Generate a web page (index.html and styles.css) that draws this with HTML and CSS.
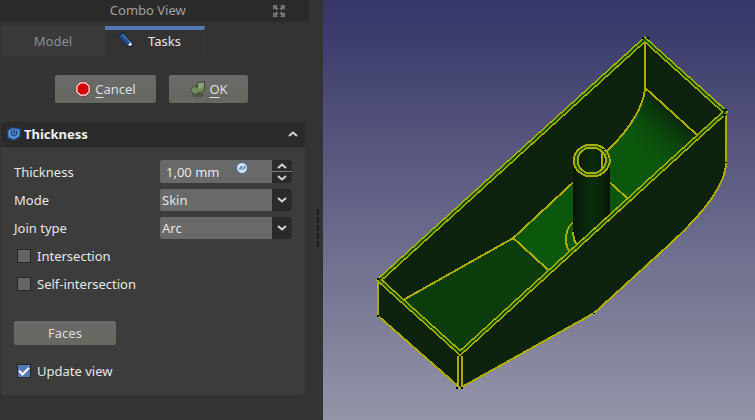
FILE: index.html
```html
<!DOCTYPE html>
<html lang="en">
<head>
    <meta charset="UTF-8">
    <meta name="viewport" content="width=device-width, initial-scale=1.0">
    <title>Combo View</title>
    <link rel="stylesheet" href="styles.css">
</head>
<body>

    <div class="app">

        <!-- Side panel -->
        <aside class="combo">
            <header class="dock-title">
                <span class="dock-name">Combo View</span>
                <button class="float-button" aria-label="Float panel">
                    <svg width="12" height="12" viewBox="0 0 12 12">
                        <path d="M0 0H5L3.500 1.500 5.500 3.500 3.500 5.500 1.500 3.500 0 5ZM12 0V5L10.500 3.500 8.500 5.500 6.500 3.500 8.500 1.500 7 0ZM0 12V7L1.500 8.500 3.500 6.500 5.500 8.500 3.500 10.500 5 12ZM12 12H7L8.500 10.500 6.500 8.500 8.500 6.500 10.500 8.500 12 7Z"/>
                    </svg>
                </button>
            </header>

            <nav class="tabs" role="tablist">
                <button class="tab" role="tab" aria-selected="false">Model</button>
                <button class="tab active" role="tab" aria-selected="true">
                    <svg width="16" height="16" viewBox="0 0 16 16">
                        <path d="M0 4L5 0L14 10L15 15L10 15Z" fill="#0b1c38"/>
                        <path d="M1 4L5 1L13 10L10 14Z" fill="#2b5796"/>
                        <path d="M2 4L11 13.500" stroke="#204a87" stroke-width="2"/>
                        <path d="M4.500 2L13 11" stroke="#5582bd" stroke-width="1"/>
                        <path d="M10 13L13 10L14 13L12 14Z" fill="#f2f2ee"/>
                    </svg>
                    Tasks
                </button>
            </nav>

            <div class="actions">
                <button class="btn btn-cancel">
                    <svg width="16" height="16" viewBox="0 0 16 16">
                        <path d="M5 1H11L15 5V11L11 15H5L1 11V5Z" fill="#f4f4f4" stroke="#a40000" stroke-width="0.500"/>
                        <path d="M5.500 2.500H10.500L13.500 5.500V10.500L10.500 13.500H5.500L2.500 10.500V5.500Z" fill="#d40000"/>
                    </svg>
                    <span><u>C</u>ancel</span>
                </button>
                <button class="btn btn-ok">
                    <svg width="16" height="16" viewBox="0 0 16 16">
                        <ellipse cx="9" cy="14" rx="6" ry="2" fill="#50524a"/>
                        <path d="M8.500 1H15.500V7Q15 12 8 12V15L0.500 9L7 4V7Q8.500 7 8.500 5Z" fill="#758c60" stroke="#3d4c30"/>
                        <path d="M9.500 2H14.500V6Q12 8 9.500 7.500Z" fill="#8fa37b"/>
                    </svg>
                    <span><u>O</u>K</span>
                </button>
            </div>

            <!-- Thickness task box -->
            <section class="task">
                <header class="task-head">
                    <svg width="14" height="14" viewBox="0 0 14 14">
                        <path d="M0.500 3L5 0.500L13.500 1.500L13 10L7 13.500L0.500 11Z" fill="#3465a4" stroke="#1d4173"/>
                        <path d="M1.500 3.500L5.500 1.500L12.500 2.500L12 9L7 12L1.500 10Z" fill="#4a7fc2"/>
                        <path d="M4.500 4V8Q7 10 9.500 7.500V4M7 2.500V7" fill="none" stroke="#1b427b"/>
                        <path d="M2.500 4V9L7 11L11.500 8.500V4" fill="none" stroke="#729fcf"/>
                    </svg>
                    <h2>Thickness</h2>
                    <button class="collapse" aria-label="Collapse">
                        <svg width="10" height="6" viewBox="0 0 10 6"><path d="M1 5L5 1.500L9 5"/></svg>
                    </button>
                </header>

                <form class="task-body">
                    <div class="row">
                        <label for="thickness">Thickness</label>
                        <div class="field">
                            <input type="text" id="thickness" class="value" value="1,00 mm">
                            <svg class="expression" width="12" height="12" viewBox="0 0 12 12">
                                <circle cx="6" cy="6" r="5.500" fill="#d5e4f3" stroke="#45678e"/>
                                <path d="M3 8L5 4L5 8L7 4M7 8L9 4V7" fill="none" stroke="#5487bd"/>
                            </svg>
                            <div class="spin">
                                <button type="button" aria-label="Increase"><svg width="10" height="6" viewBox="0 0 10 6"><path d="M1 5L5 1.500L9 5"/></svg></button>
                                <button type="button" aria-label="Decrease"><svg width="10" height="6" viewBox="0 0 10 6"><path d="M1 1L5 4.500L9 1"/></svg></button>
                            </div>
                        </div>
                    </div>
                    <div class="row">
                        <label for="mode">Mode</label>
                        <div class="field">
                            <select id="mode"><option>Skin</option></select>
                            <span class="drop"><svg width="10" height="6" viewBox="0 0 10 6"><path d="M1 1L5 4.500L9 1"/></svg></span>
                        </div>
                    </div>
                    <div class="row">
                        <label for="join">Join type</label>
                        <div class="field">
                            <select id="join"><option>Arc</option></select>
                            <span class="drop"><svg width="10" height="6" viewBox="0 0 10 6"><path d="M1 1L5 4.500L9 1"/></svg></span>
                        </div>
                    </div>

                    <label class="check"><input type="checkbox">Intersection</label>
                    <label class="check"><input type="checkbox">Self-intersection</label>
                    <button type="button" class="btn btn-faces">Faces</button>
                    <label class="check"><input type="checkbox" checked>Update view</label>
                </form>
            </section>
        </aside>

        <div class="splitter"></div>

        <!-- 3D view -->
        <main class="view">
            <svg class="scene" viewBox="323 0 432 420" role="img" aria-label="Hollow green part with a tube inside">
                <defs>
                    <linearGradient id="tube" x1="0" x2="1" y1="0" y2="0">
                        <stop offset="0" stop-color="#071507"/>
                        <stop offset="0.150" stop-color="#09200b"/>
                        <stop offset="0.500" stop-color="#0b2d0d"/>
                        <stop offset="0.850" stop-color="#09200b"/>
                        <stop offset="1" stop-color="#061206"/>
                    </linearGradient>
                    <linearGradient id="bend" gradientUnits="userSpaceOnUse" x1="674" y1="108" x2="638" y2="148">
                        <stop offset="0" stop-color="#0c220c"/>
                        <stop offset="0.300" stop-color="#0b390d"/>
                        <stop offset="0.650" stop-color="#0b4f0c"/>
                        <stop offset="1" stop-color="#0b580c"/>
                    </linearGradient>
                </defs>

                <!-- body -->
                <path class="wall" d="M378 280L644 38L726 112V163C725 186 700 216 672 242L594 313L460 388L378 316Z"/>

                <!-- floor -->
                <path fill="#0b3c0c" d="M403 301L513 238L549 272L460 354Z"/>
                <path fill="#0b580c" d="M513 238L609 149L628 199L549 272Z"/>
                <path fill="url(#bend)" d="M645 88C643 109 628 130 609 150L598 160V170L628 199L698 136Z"/>
                <path class="edge" d="M645 40V88C643 109 628 130 609 149L513 238L403 300M645 88L698 136M513 238L549 271M598 172L628 199"/>

                <!-- tube -->
                <path class="edge" fill="#0c220c" d="M576 221C563 226 564 245 570 253"/>
                <path fill="url(#tube)" d="M573 160H610V216L577 246Q573 241 573 235Z"/>
                <path class="edge" d="M573 232Q573 241 577 245"/>
                <ellipse cx="591.500" cy="160.500" rx="18" ry="16" fill="#0b580c" stroke="#acac00" stroke-width="2"/>
                <ellipse cx="591.500" cy="160.500" rx="14" ry="13" fill="url(#tube)" stroke="#acac00" stroke-width="2"/>
                <path class="edge" d="M602 170V152Q606 155 606 161"/>

                <!-- rim and outer edges -->
                <path class="rim-line" d="M379 280L644.500 39.500L725 112L460 353Z"/>
                <path class="rim-fill" d="M379 280L644.500 39.500L725 112L460 353Z"/>
                <path class="edge" d="M378 280V316L460 388L594 313L672 242C700 216 725 186 726 163"/>
                <path class="edge" d="M378 283V315M458 356V387M462 356V387M726 115V163"/>
                <path class="vertex" d="M642 37h2v2h-2zM647 37h2v2h-2zM377 278h2v2h-2zM724 109h3v2h-3zM723 114h3v2h-3zM459 352h2v2h-2zM456 387h2v2h-2zM461 387h2v2h-2zM593 313h2v1h-2zM377 315h2v2h-2zM725 162h2v1h-2zM602 149h3v1h-3z"/>
            </svg>
        </main>

    </div>

</body>
</html>
```
FILE: styles.css
```css
* {
    box-sizing: border-box;
}

body {
    margin: 0;
    background: #333333;
    color: #e6e6e6;
    font-family: "Noto Sans", sans-serif;
    font-size: 13px;
    line-height: 18px;
}

button,
input,
select {
    margin: 0;
    padding: 0;
    border: none;
    color: inherit;
    font: inherit;
}

svg {
    display: block;
    flex: none;
}

.app {
    display: flex;
    min-height: 100vh;
}

/* Side panel */
.combo {
    flex: none;
    width: 41%;
}

.dock-title {
    display: flex;
    align-items: center;
    height: 22px;
    margin-right: 1px;
    padding: 0 24px 0 23px;
    background: #2a2a2a;
    color: #a0a0a0;
    border-radius: 0 0 3px 0;
}

.dock-name {
    flex: 1;
    padding-bottom: 2px;
    text-align: center;
}

.float-button {
    background: none;
    fill: #757575;
}

.tabs {
    display: flex;
    padding: 4px 0 0 1px;
}

.tab {
    display: flex;
    align-items: center;
    justify-content: center;
    width: 104px;
    height: 30px;
    background: #3a3a3a;
    color: #8c8c8c;
}

.tab.active {
    justify-content: flex-start;
    gap: 14px;
    width: 100px;
    padding: 0 0 4px 13px;
    background: #333333;
    color: #e6e6e6;
    border-top: 4px solid #557bb6;
    border-right: 1px solid #3a3a3a;
}

.tab.active svg {
    margin-bottom: 2px;
}

/* Buttons */
.btn {
    display: flex;
    align-items: center;
    justify-content: center;
    gap: 4px;
    height: 28px;
    background: linear-gradient(#6a6a6a, #66675e);
    color: #dedede;
    border-radius: 2px;
}

.btn u {
    text-underline-offset: 3px;
}

.actions {
    display: flex;
    gap: 13px;
    padding: 19px 0 19px 55px;
}

.btn-cancel {
    width: 101px;
}

.btn-ok {
    width: 79px;
}

.btn-faces {
    width: 102px;
    height: 24px;
    margin: 26px 0 15px;
}

/* Task box */
.task {
    margin: 0 5px 0 1px;
    background: #3c3c3c;
    border-radius: 4px;
}

.task-head {
    display: flex;
    align-items: center;
    gap: 3px;
    height: 25px;
    padding: 0 7px 1px 6px;
    background: #2a2a2a;
    border-radius: 4px 4px 0 0;
}

.task-head h2 {
    flex: 1;
    margin: 0;
    font-size: 13px;
    line-height: 18px;
    color: #f0f0f0;
}

.collapse {
    background: none;
}

.collapse path,
.spin path,
.drop path {
    fill: none;
    stroke: #d6d6d6;
    stroke-width: 2;
}

.task-body {
    padding: 13px;
}

.row {
    display: grid;
    grid-template-columns: 146px 1fr;
    align-items: center;
    margin-bottom: 6px;
}

.row:first-child .field {
    height: 23px;
}

.field {
    position: relative;
    display: flex;
    height: 22px;
    background: #696969;
    border-radius: 2px;
    overflow: hidden;
}

.value {
    flex: 1;
    min-width: 0;
    padding: 1px 6px 0;
    background: transparent;
}

.expression {
    position: absolute;
    top: 2px;
    right: 44px;
}

.spin {
    display: grid;
    gap: 1px;
    width: 20px;
    background: #777777;
}

.spin button {
    display: grid;
    place-items: center;
    background: #2a2a2a;
}

.field select {
    appearance: none;
    flex: 1;
    padding: 0 2px;
    background: transparent;
}

.drop {
    position: absolute;
    top: 0;
    right: 0;
    display: grid;
    place-items: center;
    width: 20px;
    height: 100%;
    background: #2a2a2a;
    pointer-events: none;
}

.check {
    display: flex;
    align-items: center;
    gap: 6px;
    height: 22px;
    padding-left: 3px;
}

.check + .check {
    margin-top: 6px;
}

.check input {
    appearance: none;
    display: grid;
    place-items: center;
    width: 14px;
    height: 14px;
    background: #646464;
    border: 1px solid #262626;
}

.check input:checked {
    background: #557bb6;
}

.check input:checked::before {
    content: "";
    width: 8px;
    height: 4px;
    margin-bottom: 2px;
    border: solid #ffffff;
    border-width: 0 0 2px 2px;
    transform: rotate(-45deg);
}

/* Dotted handle between panel and view */
.splitter {
    align-self: center;
    flex: none;
    width: 2px;
    height: 38px;
    margin: 36px 4px 0 7px;
    background: repeating-linear-gradient(#1c1c1c 0 6px, #333333 6px 8px);
}

/* 3D view */
.view {
    flex: 1;
    background: linear-gradient(#353568, #9494a8);
}

.scene {
    width: 100%;
    height: 100vh;
    shape-rendering: crispEdges;
}

.wall {
    fill: #0c220c;
}

.edge {
    fill: none;
    stroke: #acac00;
    stroke-width: 2px;
}

.rim-line {
    fill: none;
    stroke: #acac00;
    stroke-width: 5px;
}

.rim-fill {
    fill: none;
    stroke: #0b580c;
    stroke-width: 2px;
}

.vertex {
    fill: #000000;
}
```
